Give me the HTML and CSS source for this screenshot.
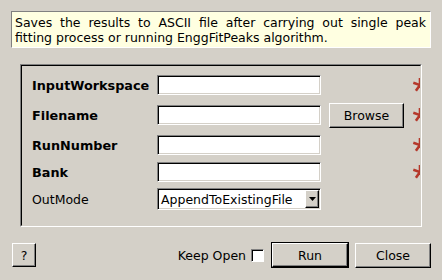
FILE: index.html
```html
<!DOCTYPE html>
<html>
<head>
<meta charset="utf-8">
<link rel="stylesheet" href="styles.css">
</head>
<body>
<div class="info">
  <span class="line first">Saves the results to ASCII file after carrying out single peak</span>
  <span class="line">fitting process or running EnggFitPeaks algorithm.</span>
</div>
<div class="panel">
  <div class="viewport">
    <div class="grid">
      <div class="label bold">InputWorkspace</div>
      <div class="field"></div>
      <div></div>
      <svg class="star" width="16" height="16" viewBox="0 0 16 16"><g stroke="#b5382b" stroke-width="2.6"><line x1="8" y1="8" x2="8" y2="1"/><line x1="8" y1="8" x2="1.3" y2="5.8"/><line x1="8" y1="8" x2="3.9" y2="13.7"/><line x1="8" y1="8" x2="12.1" y2="13.7"/><line x1="8" y1="8" x2="14.7" y2="5.8"/></g></svg>

      <div class="label bold">Filename</div>
      <div class="field"></div>
      <div class="btn browse">Browse</div>
      <svg class="star" width="16" height="16" viewBox="0 0 16 16"><g stroke="#b5382b" stroke-width="2.6"><line x1="8" y1="8" x2="8" y2="1"/><line x1="8" y1="8" x2="1.3" y2="5.8"/><line x1="8" y1="8" x2="3.9" y2="13.7"/><line x1="8" y1="8" x2="12.1" y2="13.7"/><line x1="8" y1="8" x2="14.7" y2="5.8"/></g></svg>

      <div class="label bold">RunNumber</div>
      <div class="field"></div>
      <div></div>
      <svg class="star" width="16" height="16" viewBox="0 0 16 16"><g stroke="#b5382b" stroke-width="2.6"><line x1="8" y1="8" x2="8" y2="1"/><line x1="8" y1="8" x2="1.3" y2="5.8"/><line x1="8" y1="8" x2="3.9" y2="13.7"/><line x1="8" y1="8" x2="12.1" y2="13.7"/><line x1="8" y1="8" x2="14.7" y2="5.8"/></g></svg>

      <div class="label bold">Bank</div>
      <div class="field"></div>
      <div></div>
      <svg class="star" width="16" height="16" viewBox="0 0 16 16"><g stroke="#b5382b" stroke-width="2.6"><line x1="8" y1="8" x2="8" y2="1"/><line x1="8" y1="8" x2="1.3" y2="5.8"/><line x1="8" y1="8" x2="3.9" y2="13.7"/><line x1="8" y1="8" x2="12.1" y2="13.7"/><line x1="8" y1="8" x2="14.7" y2="5.8"/></g></svg>

      <div class="label">OutMode</div>
      <div class="combo">
        <span class="combo-text">AppendToExistingFile</span>
        <span class="combo-btn"><svg width="7" height="4" viewBox="0 0 7 4"><polygon points="0,0 7,0 3.5,4" fill="#000"/></svg></span>
      </div>
      <div></div>
      <div></div>
    </div>
  </div>
</div>
<div class="bottom">
  <div class="btn help">?</div>
  <div class="spacer"></div>
  <span class="keep">Keep Open</span>
  <span class="check"></span>
  <div class="default-wrap"><div class="btn run">Run</div></div>
  <div class="btn close">Close</div>
</div>
</body>
</html>
```

FILE: styles.css
```css
html, body {
  margin: 0;
  padding: 0;
}
body {
  width: 442px;
  height: 280px;
  overflow: hidden;
  background: #d4d0c8;
  font-family: "DejaVu Sans", "Liberation Sans", sans-serif;
  font-size: 12.5px;
  color: #000;
}
.info {
  margin: 11px 0 0 11px;
  width: 420px;
  height: 37px;
  box-sizing: border-box;
  border: 1px solid;
  border-color: #808080 #ffffff #ffffff #808080;
  background: #ffffe1;
  padding: 3px 4px 0 3px;
  line-height: 15px;
}
.line {
  display: block;
  white-space: nowrap;
}
.line.first {
  text-align: justify;
  text-align-last: justify;
  white-space: normal;
}
.panel {
  margin: 16px 0 0 20px;
  width: 402px;
  height: 163px;
  box-sizing: border-box;
  border: 1px solid;
  border-color: #808080 #ffffff #ffffff #808080;
}
.viewport {
  height: 100%;
  box-sizing: border-box;
  border: 1px solid;
  border-color: #000000 #d4d0c8 #d4d0c8 #000000;
  overflow: hidden;
  padding: 4px 0 0 10px;
}
.grid {
  display: grid;
  grid-template-columns: 125px 172px 82px 20px;
  grid-template-rows: 30px 30px 30px 24px 30px;
  align-items: center;
}
.label {
  white-space: nowrap;
}
.bold {
  font-weight: bold;
  font-size: 12.8px;
}
.field {
  width: 164px;
  height: 20px;
  box-sizing: border-box;
  background: #fff;
  border: 1px solid;
  border-color: #808080 #ffffff #ffffff #808080;
  box-shadow: inset 1px 1px 0 #000, inset -1px -1px 0 #d4d0c8;
}
.btn {
  box-sizing: border-box;
  display: flex;
  align-items: center;
  justify-content: center;
  background: #d4d0c8;
  border: 1px solid;
  border-color: #ffffff #000000 #000000 #ffffff;
  box-shadow: inset -1px -1px 0 #808080;
  white-space: nowrap;
}
.browse {
  width: 75px;
  height: 25px;
}
.star {
  display: block;
  margin-left: 1px;
}
.combo {
  width: 164px;
  height: 22px;
  box-sizing: border-box;
  background: #fff;
  border: 1px solid;
  border-color: #808080 #ffffff #ffffff #808080;
  box-shadow: inset 1px 1px 0 #000, inset -1px -1px 0 #d4d0c8;
  display: flex;
  align-items: center;
  padding: 2px 1px 2px 2px;
}
.combo-text {
  flex: 1;
  padding-left: 1px;
  white-space: nowrap;
}
.combo-btn {
  width: 14px;
  height: 18px;
  box-sizing: border-box;
  background: #d4d0c8;
  border: 1px solid;
  border-color: #ffffff #000000 #000000 #ffffff;
  box-shadow: inset -1px -1px 0 #808080;
  display: flex;
  align-items: center;
  justify-content: center;
}
.combo-btn svg {
  display: block;
}
.bottom {
  margin-top: 15px;
  height: 26px;
  display: flex;
  align-items: center;
  padding: 0 11px 0 12px;
}
.help {
  width: 24px;
  height: 24px;
}
.spacer {
  flex: 1;
}
.keep {
  white-space: nowrap;
}
.check {
  width: 13px;
  height: 13px;
  box-sizing: border-box;
  margin-left: 5px;
  background: #fff;
  border: 1px solid;
  border-color: #808080 #ffffff #ffffff #808080;
  box-shadow: inset 1px 1px 0 #000;
}
.default-wrap {
  margin-left: 7px;
  border: 1px solid #000;
}
.run {
  width: 76px;
  height: 24px;
}
.close {
  margin-left: 6px;
  width: 76px;
  height: 25px;
}
```
